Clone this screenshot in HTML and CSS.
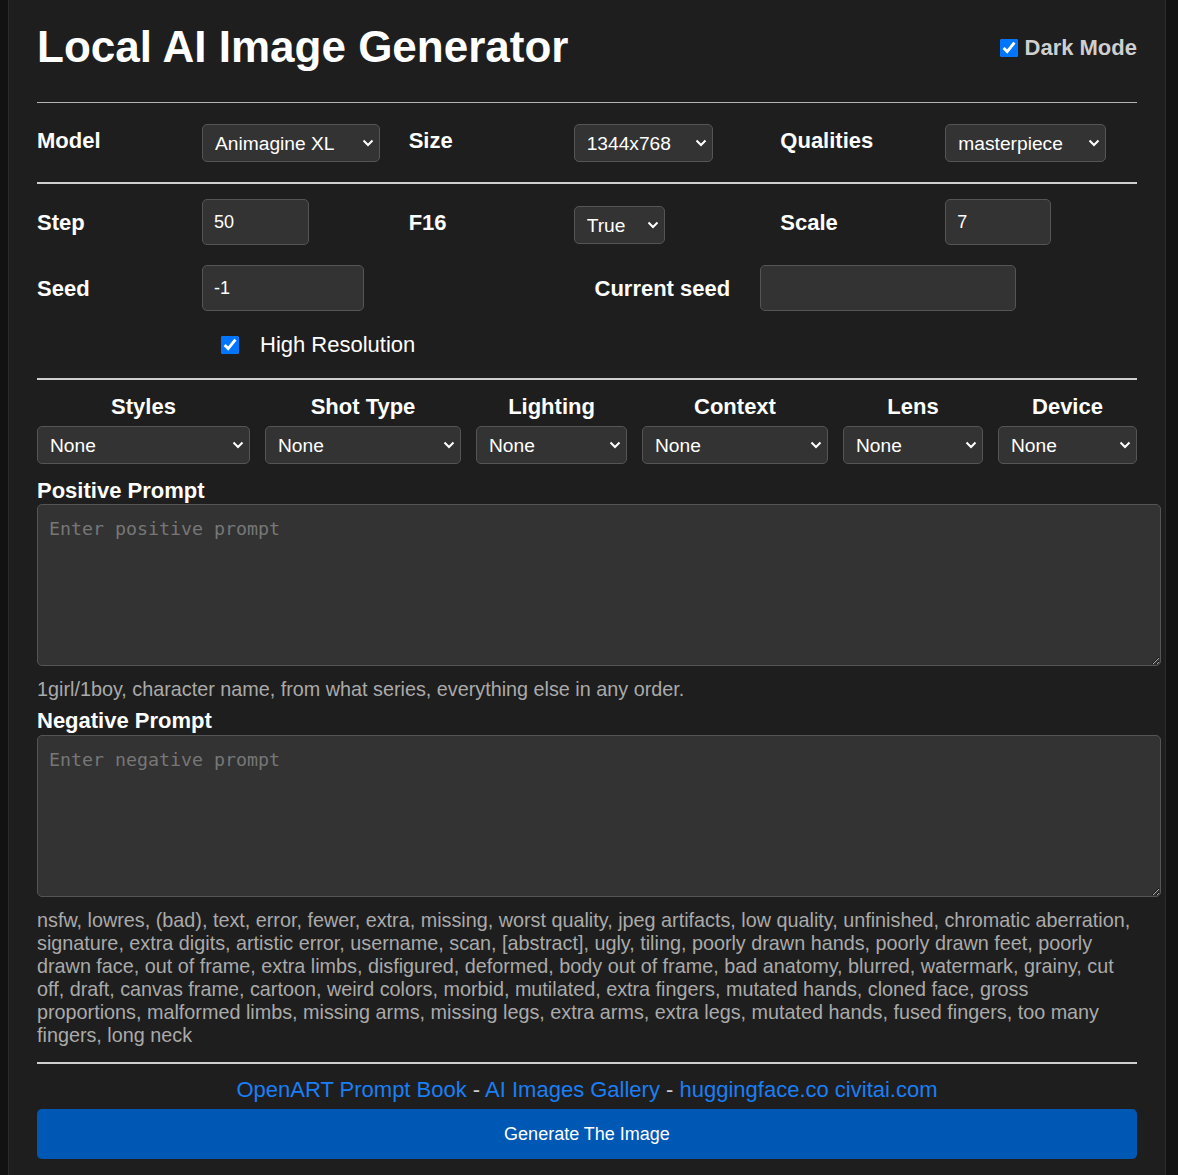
FILE: index.html
```html
<!DOCTYPE html>
<html lang="en">
<head>
<meta charset="utf-8">
<title>Local AI Image Generator</title>
<link rel="stylesheet" href="styles.css">
</head>
<body>
<div class="container">
  <header class="header">
    <h1 class="title">Local AI Image Generator</h1>
    <label class="dark-toggle"><input type="checkbox" class="check" checked> Dark Mode</label>
  </header>

  <div class="row row-main">
    <span class="lbl lbl-up">Model</span>
    <div><select class="sel sel-model"><option>Animagine XL</option></select></div>
    <span class="lbl lbl-up">Size</span>
    <div><select class="sel sel-size"><option>1344x768</option></select></div>
    <span class="lbl lbl-up">Qualities</span>
    <div><select class="sel sel-qual"><option>masterpiece</option></select></div>
  </div>

  <div class="params">
    <div class="row row-six">
      <span class="lbl">Step</span>
      <div><input class="inp inp-step" type="text" value="50"></div>
      <span class="lbl">F16</span>
      <div class="f16-cell"><select class="sel sel-true"><option>True</option></select></div>
      <span class="lbl">Scale</span>
      <div><input class="inp inp-scale" type="text" value="7"></div>
    </div>
    <div class="row row-four">
      <span class="lbl">Seed</span>
      <div><input class="inp inp-seed" type="text" value="-1"></div>
      <span class="lbl">Current seed</span>
      <div><input class="inp inp-cur" type="text" value=""></div>
    </div>
    <label class="hires"><input type="checkbox" class="check check-hires" checked><span>High Resolution</span></label>
  </div>

  <div class="cats">
    <div class="cat cat-styles"><span class="cat-h">Styles</span><select class="sel sel-cat"><option>None</option></select></div>
    <div class="cat cat-shot"><span class="cat-h">Shot Type</span><select class="sel sel-cat"><option>None</option></select></div>
    <div class="cat cat-light"><span class="cat-h">Lighting</span><select class="sel sel-cat"><option>None</option></select></div>
    <div class="cat cat-context"><span class="cat-h">Context</span><select class="sel sel-cat"><option>None</option></select></div>
    <div class="cat cat-lens"><span class="cat-h">Lens</span><select class="sel sel-cat"><option>None</option></select></div>
    <div class="cat cat-device"><span class="cat-h">Device</span><select class="sel sel-cat"><option>None</option></select></div>
  </div>

  <h2 class="ph ph-pos">Positive Prompt</h2>
  <textarea class="ta" placeholder="Enter positive prompt"></textarea>
  <p class="hint hint-pos">1girl/1boy, character name, from what series, everything else in any order.</p>

  <h2 class="ph ph-neg">Negative Prompt</h2>
  <textarea class="ta" placeholder="Enter negative prompt"></textarea>
  <p class="hint hint-neg">nsfw, lowres, (bad), text, error, fewer, extra, missing, worst quality, jpeg artifacts, low quality, unfinished, chromatic aberration, signature, extra digits, artistic error, username, scan, [abstract], ugly, tiling, poorly drawn hands, poorly drawn feet, poorly drawn face, out of frame, extra limbs, disfigured, deformed, body out of frame, bad anatomy, blurred, watermark, grainy, cut off, draft, canvas frame, cartoon, weird colors, morbid, mutilated, extra fingers, mutated hands, cloned face, gross proportions, malformed limbs, missing arms, missing legs, extra arms, extra legs, mutated hands, fused fingers, too many fingers, long neck</p>

  <div class="links">
    <a href="#">OpenART Prompt Book</a> - <a href="#">AI Images Gallery</a> - <a href="#">huggingface.co</a> <a href="#">civitai.com</a>
  </div>
  <button class="gen" type="button">Generate The Image</button>
</div>
</body>
</html>
```

FILE: styles.css
```css
html {
  background: #121212;
}
body {
  margin: 0 0 0 8px;
  background: #121212;
  font-family: "Liberation Sans", Arial, sans-serif;
  color: #ffffff;
}
.container {
  width: 1100px;
  padding: 0 28px 14px;
  background: #1e1e1e;
  border-left: 1px solid #2c2c2c;
  border-right: 1px solid #2c2c2c;
  min-height: 1161px;
}
.header {
  display: flex;
  justify-content: space-between;
  align-items: center;
  padding-top: 22px;
  padding-bottom: 30px;
  border-bottom: 1px solid #b5b5b5;
}
.title {
  margin: 0;
  font-size: 44px;
  line-height: 50px;
  font-weight: 700;
}
.dark-toggle {
  display: flex;
  align-items: center;
  gap: 7px;
  font-size: 22px;
  font-weight: 700;
  color: #cfcfcf;
  margin-top: 2px;
}
.check {
  width: 18px;
  height: 18px;
  margin: 0;
  accent-color: #0075ff;
}
.row {
  display: grid;
  column-gap: 15px;
  align-items: center;
}
.row-main,
.row-six {
  grid-template-columns: 150px 1fr 150px 1fr 150px 1fr;
}
.row-main {
  padding: 21px 0 20px;
  border-bottom: 2px solid #cfcfcf;
}
.row-four {
  grid-template-columns: 150px 1fr 150px 1fr;
  margin-top: 20px;
}
.lbl {
  font-size: 22px;
  font-weight: 700;
  line-height: 25px;
}
.lbl-up {
  padding-bottom: 6px;
}
.sel {
  -webkit-appearance: none;
  appearance: none;
  box-sizing: border-box;
  height: 38px;
  margin: 0;
  padding: 0 30px 0 12px;
  font-family: "Liberation Sans", Arial, sans-serif;
  font-size: 19.2px;
  color: #ffffff;
  background-color: #333333;
  background-image: url("data:image/svg+xml,%3Csvg xmlns='http://www.w3.org/2000/svg' width='12' height='8' viewBox='0 0 12 8'%3E%3Cpath d='M1.5 1.5 L6 6 L10.5 1.5' fill='none' stroke='%23ffffff' stroke-width='2'/%3E%3C/svg%3E");
  background-repeat: no-repeat;
  background-position: right 5px center;
  border: 1px solid #555555;
  border-radius: 5px;
  display: block;
}
.sel-model { width: 178px; }
.sel-size { width: 139px; }
.sel-qual { width: 161px; }
.sel-true { width: 91px; }
.f16-cell {
  align-self: end;
  margin-bottom: 1px;
}
.params {
  padding-top: 15px;
  padding-bottom: 21px;
  border-bottom: 2px solid #cfcfcf;
}
.inp {
  box-sizing: border-box;
  height: 46px;
  margin: 0;
  padding: 0 11px;
  font-family: "Liberation Sans", Arial, sans-serif;
  font-size: 18px;
  color: #ffffff;
  background: #333333;
  border: 1px solid #555555;
  border-radius: 5px;
  display: block;
}
.inp-step { width: 107px; }
.inp-scale { width: 106px; }
.inp-seed { width: 162px; }
.inp-cur { width: 256px; }
.hires {
  display: flex;
  align-items: center;
  height: 25px;
  margin-top: 21px;
  padding-left: 184px;
  font-size: 22px;
  line-height: 25px;
}
.check-hires {
  margin-right: 21px;
}
.cats {
  display: flex;
  gap: 15px;
  padding-top: 14px;
}
.cat {
  display: flex;
  flex-direction: column;
  align-items: stretch;
  gap: 7px;
}
.cat-h {
  text-align: center;
  font-size: 22px;
  font-weight: 700;
  line-height: 25px;
}
.sel-cat {
  width: 100%;
}
.cat-styles { width: 213px; }
.cat-shot { width: 196px; }
.cat-light { width: 151px; }
.cat-context { width: 186px; }
.cat-lens { width: 140px; }
.cat-device { width: 139px; }
.ph {
  margin: 0;
  font-size: 22px;
  font-weight: 700;
  line-height: 25px;
}
.ph-pos {
  margin-top: 14px;
  margin-bottom: 1px;
}
.ph-neg {
  margin-top: 7px;
  margin-bottom: 2px;
}
.ta {
  display: block;
  width: 100%;
  height: 136px;
  margin: 0;
  padding: 13px 11px 11px;
  font-family: "DejaVu Sans Mono", "Liberation Mono", monospace;
  font-size: 18.3px;
  color: #ffffff;
  background: #333333;
  border: 1px solid #555555;
  border-radius: 5px;
  resize: vertical;
}
.ta::placeholder {
  color: #777777;
}
.hint {
  margin: 0;
  font-size: 19.8px;
  line-height: 23px;
  color: #aaaaaa;
}
.hint-pos {
  margin-top: 12px;
}
.hint-neg {
  margin-top: 12px;
  padding-bottom: 15px;
  border-bottom: 2px solid #cfcfcf;
}
.links {
  margin-top: 13px;
  text-align: center;
  font-size: 22px;
  line-height: 25px;
  color: #cccccc;
}
.links a {
  color: #1a7ff5;
  text-decoration: none;
}
.gen {
  display: block;
  width: 100%;
  height: 50px;
  margin-top: 7px;
  font-family: "Liberation Sans", Arial, sans-serif;
  font-size: 18px;
  color: #ffffff;
  background: #0058b5;
  border: none;
  border-radius: 5px;
}
```
